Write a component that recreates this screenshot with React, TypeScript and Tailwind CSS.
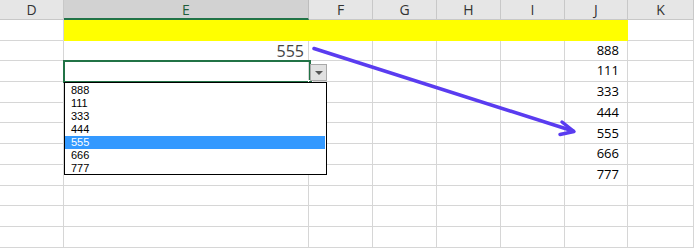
const cols = ['D', 'E', 'F', 'G', 'H', 'I', 'J', 'K'];
const jValues = ['', '888', '111', '333', '444', '555', '666', '777', '', '', ''];
const listItems = ['888', '111', '333', '444', '555', '666', '777'];

function Arrow() {
  return (
    <svg className="absolute left-0 top-0 pointer-events-none" width="694" height="248">
      <g stroke="#5a3cf0" strokeWidth="3.5" strokeLinecap="round" fill="none">
        <line x1="314" y1="48.5" x2="573" y2="131" />
        <polyline points="562,122 574,131.5 560,134.5" strokeLinejoin="round" />
      </g>
    </svg>
  );
}

export default function App() {
  return (
    <div
      className="relative w-[694px] h-[248px] overflow-hidden bg-white"
      style={{ fontFamily: '"Open Sans", "Liberation Sans", sans-serif' }}
    >
      <div className="grid grid-cols-[64px_245px_64px_64px_64px_64px_63px_66px] grid-rows-[20px_repeat(11,20.7px)]">
        {cols.map((c) => (
          <div
            key={c}
            className={
              c === 'E'
                ? 'flex items-center justify-center bg-[#d2d2d2] border-r border-[#bdbdbd] border-b-2 border-b-[#217346] text-[14px] text-[#1e5e3a]'
                : 'flex items-center justify-center bg-[#e6e6e6] border-r border-b border-[#c8c8c8] text-[14px] text-[#333]'
            }
          >
            {c}
          </div>
        ))}
        {jValues.map((j, r) =>
          cols.map((c) => {
            const yellow = r === 0 && c !== 'D' && c !== 'K';
            return (
              <div
                key={c + r}
                className={
                  'flex items-center justify-end border-r border-b ' +
                  (yellow ? 'bg-[#ffff00] border-[#ffff00]' : 'border-[#d6d6d6]')
                }
              >
                {c === 'J' && j && <span className="pr-[8px] text-[13px] text-black">{j}</span>}
                {c === 'E' && r === 1 && (
                  <span className="pr-[4px] text-[16px] text-[#444]">555</span>
                )}
              </div>
            );
          })
        )}
      </div>

      {/* active cell */}
      <div className="absolute left-[63px] top-[60px] w-[248px] h-[23px] border-2 border-[#217346]">
        <div className="absolute right-[-4px] bottom-[-4px] w-[5px] h-[5px] bg-[#217346] border border-white" />
      </div>

      {/* dropdown button */}
      <div className="absolute left-[310px] top-[64px] w-[17px] h-[17px] bg-[#e1e1e1] border border-[#a8a8a8] flex items-center justify-center">
        <div className="w-0 h-0 border-l-[4px] border-r-[4px] border-t-[4px] border-l-transparent border-r-transparent border-t-[#555]" />
      </div>

      {/* list */}
      <div
        className="absolute left-[64px] top-[82px] w-[263px] h-[93px] bg-white border border-black pt-[1px] flex flex-col"
        style={{ fontFamily: '"Liberation Sans", Arial, sans-serif' }}
      >
        {listItems.map((v) => (
          <div
            key={v}
            className={
              'h-[13px] leading-[13px] pl-[6px] text-[11px] ' +
              (v === '555' ? 'bg-[#3399ff] text-white mr-[1px]' : 'text-black')
            }
          >
            {v}
          </div>
        ))}
      </div>

      <Arrow />
    </div>
  );
}
